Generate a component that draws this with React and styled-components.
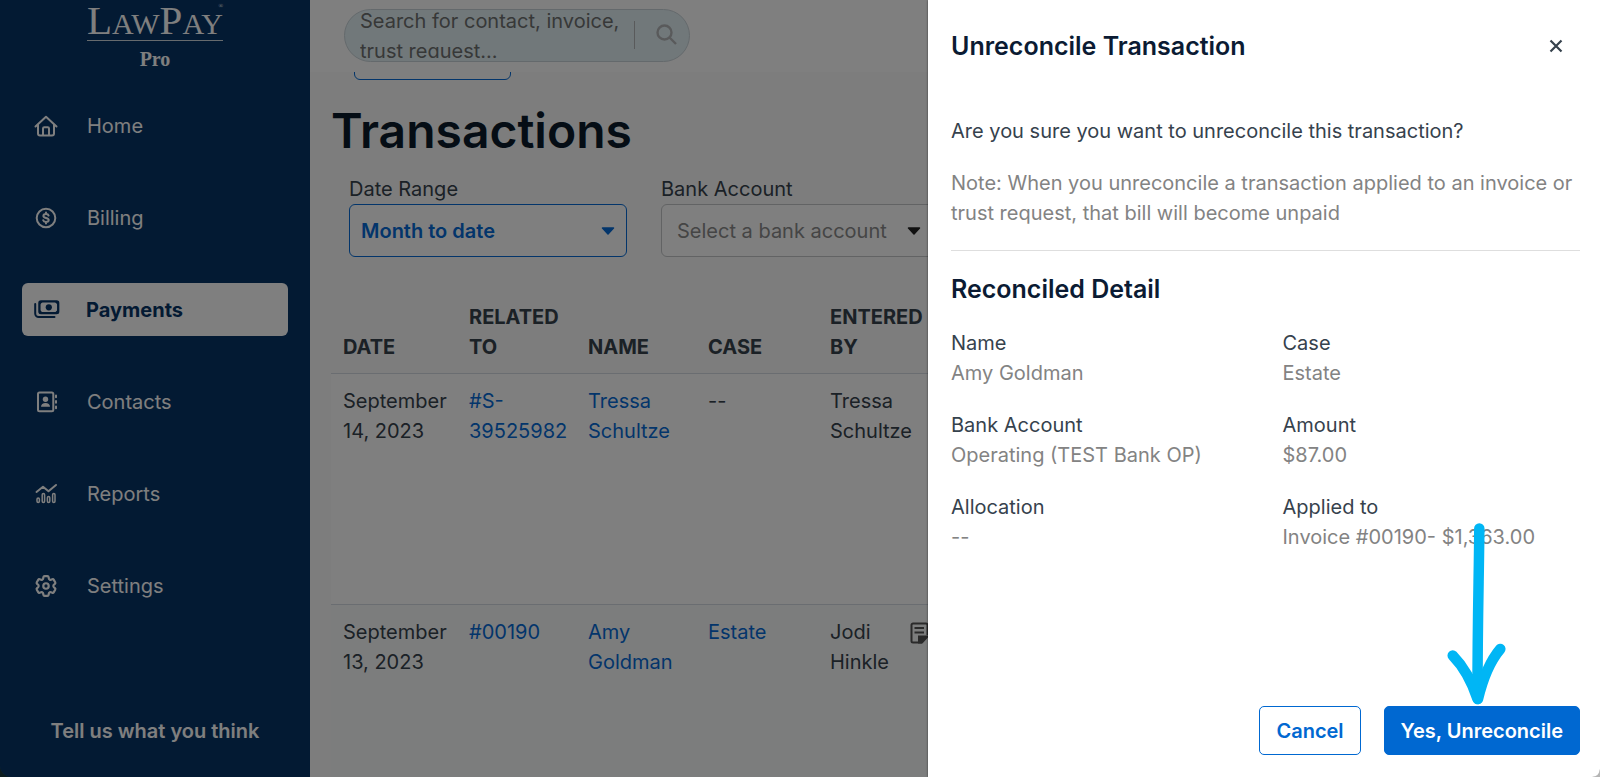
import React from 'react';
import styled, { createGlobalStyle, css } from 'styled-components';

const navItems = [
    { label: 'Home', icon: HomeIcon },
    { label: 'Billing', icon: BillingIcon },
    { label: 'Payments', icon: PaymentsIcon, active: true },
    { label: 'Contacts', icon: ContactsIcon },
    { label: 'Reports', icon: ReportsIcon },
    { label: 'Settings', icon: SettingsIcon },
];

const transactions = [
    { date: 'September 14, 2023', related: '#S-39525982', name: 'Tressa Schultze', matter: '--', enteredBy: 'Tressa Schultze' },
    { date: 'September 13, 2023', related: '#00190', name: 'Amy Goldman', matter: 'Estate', enteredBy: 'Jodi Hinkle', note: true },
];

const details = [
    ['Name', 'Amy Goldman'],
    ['Case', 'Estate'],
    ['Bank Account', 'Operating (TEST Bank OP)'],
    ['Amount', '$87.00'],
    ['Allocation', '--'],
    ['Applied to', 'Invoice #00190- $1,363.00'],
];

export default function App() {
    return (
        <>
            <GlobalStyle />
            <Page>
                <Sidebar />
                <Main>
                    <TopBar>
                        <Search>
                            <SearchInput aria-label="Search" placeholder="Search for contact, invoice, trust request..." />
                            <SearchDivider />
                            <SearchButton aria-label="Submit search"><SearchIcon /></SearchButton>
                        </Search>
                    </TopBar>
                    <Content>
                        <ScrolledButton aria-label="Back" />
                        <Title>Transactions</Title>
                        <Filters>
                            <Filter>
                                <label htmlFor="range">Date Range</label>
                                <SelectBox>
                                    <Select id="range" $selected><option>Month to date</option></Select>
                                    <Caret color="#066bd6" />
                                </SelectBox>
                            </Filter>
                            <Filter>
                                <label htmlFor="account">Bank Account</label>
                                <SelectBox>
                                    <Select id="account"><option>Select a bank account</option></Select>
                                    <Caret color="#222" inset />
                                </SelectBox>
                            </Filter>
                        </Filters>
                        <Transactions />
                    </Content>
                </Main>
                <Overlay />
                <UnreconcileDrawer />
            </Page>
        </>
    );
}

function Sidebar() {
    return (
        <SideNav>
            <Logo>
                <LogoName>L<small>AW</small>P<small>AY</small><sup>®</sup></LogoName>
                <LogoTier>Pro</LogoTier>
            </Logo>
            <NavList>
                {navItems.map(({ label, icon: Icon, active }) => (
                    <li key={label}>
                        <NavLink href="#" $active={active}>
                            <Icon />
                            {label}
                        </NavLink>
                    </li>
                ))}
            </NavList>
            <Feedback href="#">Tell us what you think</Feedback>
        </SideNav>
    );
}

function Transactions() {
    return (
        <Table>
            <colgroup>
                <Col $width={126} />
                <Col $width={119} />
                <Col $width={120} />
                <Col $width={122} />
                <Col $width={80} />
                <col />
            </colgroup>
            <thead>
                <tr>
                    <th>DATE</th>
                    <th>RELATED TO</th>
                    <th>NAME</th>
                    <th>CASE</th>
                    <th>ENTERED BY</th>
                    <th></th>
                </tr>
            </thead>
            <tbody>
                {transactions.map((row) => (
                    <tr key={row.date}>
                        <td>{row.date}</td>
                        <td><a href="#">{row.related}</a></td>
                        <td><a href="#">{row.name}</a></td>
                        <td>{row.matter === '--' ? '--' : <a href="#">{row.matter}</a>}</td>
                        <td>{row.enteredBy}</td>
                        <td>{row.note && <NoteIcon />}</td>
                    </tr>
                ))}
            </tbody>
        </Table>
    );
}

function UnreconcileDrawer() {
    return (
        <Drawer role="dialog" aria-labelledby="drawer-title">
            <DrawerHeader>
                <Heading id="drawer-title">Unreconcile Transaction</Heading>
                <CloseButton aria-label="Close"><CloseIcon /></CloseButton>
            </DrawerHeader>
            <DrawerBody>
                <Question>Are you sure you want to unreconcile this transaction?</Question>
                <Note>Note: When you unreconcile a transaction applied to an invoice or trust request, that bill will become unpaid</Note>
                <Divider />
                <Heading>Reconciled Detail</Heading>
                <DetailGrid>
                    {details.map(([term, value]) => (
                        <div key={term}>
                            <dt>{term}</dt>
                            <dd>{value}</dd>
                        </div>
                    ))}
                </DetailGrid>
            </DrawerBody>
            <DrawerFooter>
                <Button>Cancel</Button>
                <Button $primary>Yes, Unreconcile</Button>
                <Pointer viewBox="0 0 60 184" aria-hidden="true">
                    <path d="M32.300 7.500 C32 55 30.500 95 30.500 175" strokeWidth="10.500" />
                    <path d="M5.700 134.500 C16 145 25 161 30.500 178" strokeWidth="10.500" />
                    <path d="M53.300 128 C44 139 36 157 31 178" strokeWidth="10.500" />
                    <path d="M22 156 L30.500 178 L39 156 Z" strokeWidth="6" fill="#00b6f5" />
                </Pointer>
            </DrawerFooter>
        </Drawer>
    );
}

/* Icons */

function HomeIcon() {
    return (
        <Icon viewBox="0 0 24 24">
            <path d="M1.500 12.500 12 2.800l10.500 9.700" />
            <path d="M4 10.800V19.500a2 2 0 0 0 2 2h12a2 2 0 0 0 2-2v-8.700" />
            <path d="M9 21v-6.500a1.300 1.300 0 0 1 1.300-1.300h3.400a1.300 1.300 0 0 1 1.300 1.300V21" />
        </Icon>
    );
}

function BillingIcon() {
    return (
        <Icon viewBox="0 0 24 24">
            <circle cx="12" cy="12" r="9.300" />
            <path d="M14.600 9.600c-.3-1-1.300-1.500-2.600-1.500-1.500 0-2.600.7-2.600 1.900 0 2.800 5.300 1.200 5.300 4.100 0 1.200-1.200 1.900-2.700 1.900-1.500 0-2.500-.6-2.800-1.700M12 6.600v1.500M12 16v1.500" />
        </Icon>
    );
}

function PaymentsIcon() {
    return (
        <Icon viewBox="0 0 26 24" $wide>
            <path d="M1.200 6V15.500a3.500 3.500 0 0 0 3.500 3.500H20.500" />
            <rect x="5.400" y="3.400" width="18.800" height="11.800" rx="1.600" strokeWidth="2.300" />
            <circle cx="14.800" cy="9.300" r="3.100" fill="currentColor" stroke="none" />
            <path d="M5 3h4.500L5 7.500zM24.500 3H20l4.500 4.500zM5 15.500h4.500L5 11zM24.500 15.500H20l4.500-4.500z" fill="currentColor" stroke="none" />
        </Icon>
    );
}

function ContactsIcon() {
    return (
        <Icon viewBox="0 0 24 24">
            <rect x="4" y="2.500" width="15.300" height="18.700" rx="1.500" />
            <circle cx="11.500" cy="9.300" r="2.700" fill="currentColor" stroke="none" />
            <path d="M7 16.800c0-2.600 1.800-3.900 4.500-3.900s4.500 1.300 4.500 3.900z" fill="currentColor" stroke="none" />
            <path d="M22 5.500v1.800M22 11v1.800M22 16.500v1.800" />
        </Icon>
    );
}

function ReportsIcon() {
    return (
        <Icon viewBox="0 0 24 24">
            <path d="M2.500 10 9 4.800l5.500 4.400L22 3" />
            <rect x="3" y="16" width="2.400" height="4.500" rx="1.200" strokeWidth="1.500" />
            <rect x="8.200" y="11.500" width="2.400" height="9" rx="1.200" strokeWidth="1.500" />
            <rect x="13.400" y="14.500" width="2.400" height="6" rx="1.200" strokeWidth="1.500" />
            <rect x="18.600" y="11.500" width="2.400" height="9" rx="1.200" strokeWidth="1.500" />
        </Icon>
    );
}

function SettingsIcon() {
    return (
        <Icon viewBox="1 1 22 22">
            <path d="M9.594 3.940c.090-.542.560-.940 1.110-.940h2.593c.550 0 1.020.398 1.110.940l.213 1.281c.063.374.313.686.645.870.074.040.147.083.220.127.325.196.720.257 1.075.124l1.217-.456a1.125 1.125 0 0 1 1.370.490l1.296 2.247a1.125 1.125 0 0 1-.260 1.431l-1.003.827c-.293.241-.438.613-.430.992a7.723 7.723 0 0 1 0 .255c-.008.378.137.750.430.991l1.004.827c.424.350.534.955.260 1.430l-1.298 2.247a1.125 1.125 0 0 1-1.369.491l-1.217-.456c-.355-.133-.750-.072-1.076.124a6.470 6.470 0 0 1-.220.128c-.331.183-.581.495-.644.869l-.213 1.281c-.090.543-.560.940-1.110.940h-2.594c-.550 0-1.019-.398-1.110-.940l-.213-1.281c-.062-.374-.312-.686-.644-.870a6.520 6.520 0 0 1-.220-.127c-.325-.196-.720-.257-1.076-.124l-1.217.456a1.125 1.125 0 0 1-1.369-.490l-1.297-2.247a1.125 1.125 0 0 1 .260-1.431l1.004-.827c.292-.240.437-.613.430-.991a6.932 6.932 0 0 1 0-.255c.007-.380-.138-.751-.430-.992l-1.004-.827a1.125 1.125 0 0 1-.260-1.430l1.297-2.247a1.125 1.125 0 0 1 1.370-.491l1.216.456c.356.133.751.072 1.076-.124.072-.044.146-.086.220-.128.332-.183.582-.495.644-.869l.214-1.280Z" />
            <circle cx="12" cy="12" r="2.500" />
        </Icon>
    );
}

function SearchIcon() {
    return (
        <svg width="21" height="21" viewBox="0 0 21 21" fill="none" stroke="#b3b5b7" strokeWidth="2.400">
            <circle cx="8.500" cy="8.500" r="7" />
            <path d="M13.500 13.500 20 20" />
        </svg>
    );
}

function NoteIcon() {
    return (
        <NoteSvg viewBox="0 0 20 22">
            <path d="M12 20.500H3A1.500 1.500 0 0 1 1.500 19V3A1.500 1.500 0 0 1 3 1.500h13A1.500 1.500 0 0 1 17.500 3v10" />
            <path d="M4.500 6h9.500M4.500 10.500h9.500" />
            <path d="M9 20.500V14.500H17.500L12 20.500z" fill="currentColor" />
        </NoteSvg>
    );
}

function CloseIcon() {
    return (
        <svg width="14" height="14" viewBox="0 0 14 14" fill="none" stroke="#36424d" strokeWidth="2.200">
            <path d="M1.500 1.500l11 11M12.500 1.500l-11 11" />
        </svg>
    );
}

function Caret({ color, inset }) {
    return (
        <CaretSvg viewBox="0 0 14 8" $inset={inset}>
            <path d="M1.500 1h11L7 7z" fill={color} stroke={color} strokeWidth="1.500" strokeLinejoin="round" />
        </CaretSvg>
    );
}

/* Styles */

const GlobalStyle = createGlobalStyle`
    * {
        box-sizing: border-box;
    }
    body {
        margin: 0;
        background: linear-gradient(90deg, #0c1c1e 50%, #b5b5b5 50%);
        color: #36424d;
        font: 400 20px/30px Inter, sans-serif;
    }
    button, select, textarea {
        font: inherit;
    }
    h1, h2, p, ul, dl, dd {
        margin: 0;
        padding: 0;
    }
    a {
        color: #066bd6;
        text-decoration: none;
    }
`;

const Page = styled.div`
    display: flex;
    height: 100vh;
    overflow: hidden;
    position: relative;
    border-radius: 0 0 8px 12px;
`;

const SideNav = styled.nav`
    display: flex;
    flex-direction: column;
    flex: 0 0 310px;
    padding: 0 22px 31px;
    background: #073466;
    color: #fff;
`;

const Logo = styled.div`
    display: flex;
    flex-direction: column;
    align-items: center;
    height: 99px;
    font-family: 'Liberation Serif', serif;
`;

const LogoName = styled.div`
    position: relative;
    height: 41px;
    border-bottom: 1px solid #cfd6dd;
    font-size: 41px;
    line-height: 41px;
    small {
        font-size: 30px;
    }
    sup {
        position: absolute;
        top: 2px;
        right: 0;
        font-size: 6px;
        line-height: 8px;
    }
`;

const LogoTier = styled.div`
    margin-top: 3px;
    font-size: 20px;
    font-weight: 700;
`;

const NavList = styled.ul`
    display: flex;
    flex-direction: column;
    gap: 39px;
    list-style: none;
`;

const NavLink = styled.a`
    display: flex;
    align-items: center;
    height: 53px;
    padding-left: 12px;
    gap: 29px;
    border-radius: 6px;
    color: #fff;
    ${({ $active }) => $active && css`
        background: #fff;
        color: #073466;
        font-weight: 700;
    `}
`;

const Icon = styled.svg`
    width: ${({ $wide }) => ($wide ? '26px' : '24px')};
    height: 24px;
    margin-right: ${({ $wide }) => ($wide ? '-3px' : '0')};
    fill: none;
    stroke: currentColor;
    stroke-width: 2;
    stroke-linecap: round;
    stroke-linejoin: round;
`;

const Feedback = styled.a`
    margin-top: auto;
    color: #fff;
    font-weight: 600;
    text-align: center;
`;

const Main = styled.main`
    display: flex;
    flex-direction: column;
    flex: 1;
    min-width: 0;
    background: #fafafa;
`;

const TopBar = styled.header`
    flex: 0 0 72px;
    padding: 9px 34px;
    background: #fff;
`;

const Search = styled.div`
    display: flex;
    align-items: flex-end;
    width: 346px;
    height: 53px;
    padding: 0 12px 3px 15px;
    border: 1px solid #c9d3d8;
    border-radius: 27px;
    background: #e2f0f5;
`;

const SearchInput = styled.textarea`
    flex: 1;
    min-width: 0;
    height: 52px;
    padding: 0;
    border: 0;
    background: none;
    overflow: hidden;
    resize: none;
    &::placeholder {
        color: #6f7071;
    }
`;

const SearchDivider = styled.span`
    width: 1px;
    height: 28px;
    margin-bottom: 9px;
    background: #b3b5b7;
`;

const SearchButton = styled.button`
    display: flex;
    margin: 0 0 13px;
    padding: 0 0 0 21px;
    border: 0;
    background: none;
`;

const Content = styled.div`
    flex: 1;
    padding-left: 21px;
    overflow: hidden;
`;

/* Mostly scrolled away beneath the top bar */
const ScrolledButton = styled.button`
    display: block;
    width: 157px;
    height: 48px;
    margin: -40px 0 0 23px;
    border: 1px solid #066bd6;
    border-radius: 6px;
    background: #fff;
`;

const Title = styled.h1`
    margin: 21px 0 13px;
    color: #0b1b2b;
    font-size: 48px;
    font-weight: 600;
    line-height: 60px;
`;

const Filters = styled.div`
    display: flex;
    gap: 34px;
    padding-left: 18px;
`;

const Filter = styled.div`
    flex: 0 0 278px;
`;

const SelectBox = styled.div`
    position: relative;
`;

const Select = styled.select`
    display: block;
    width: 100%;
    height: 53px;
    padding: 0 11px 0 15px;
    appearance: none;
    border: 1px solid #c4c6c8;
    border-radius: 6px;
    background: #fff;
    color: #8b8b8b;
    ${({ $selected }) => $selected && css`
        padding-left: 11px;
        border-color: #066bd6;
        color: #066bd6;
        font-weight: 600;
    `}
`;

const CaretSvg = styled.svg`
    position: absolute;
    top: 23px;
    right: ${({ $inset }) => ($inset ? '18px' : '12px')};
    width: 14px;
    height: 8px;
    pointer-events: none;
`;

const Table = styled.table`
    width: 100%;
    margin-top: 32px;
    border-collapse: collapse;
    table-layout: fixed;
    th, td {
        padding: 12px 0 12px 12px;
        text-align: left;
        vertical-align: top;
    }
    th {
        padding-top: 13px;
        padding-bottom: 11px;
        vertical-align: bottom;
        border-bottom: 1px solid #d5dbe2;
        font-weight: 700;
    }
    td {
        height: 231px;
        border-bottom: 1px solid #d5dbe2;
        background: #fff;
    }
    tr:nth-child(even) td {
        background: #f9fafb;
    }
`;

const Col = styled.col`
    width: ${({ $width }) => $width}px;
`;

const NoteSvg = styled.svg`
    display: block;
    width: 20px;
    height: 22px;
    margin-top: 5px;
    color: #555;
    fill: none;
    stroke: currentColor;
    stroke-width: 2;
`;

const Overlay = styled.div`
    position: absolute;
    inset: 0;
    background: rgba(0, 0, 0, 0.5);
`;

const Drawer = styled.section`
    position: absolute;
    top: 0;
    right: 0;
    bottom: 0;
    display: flex;
    flex-direction: column;
    width: 42%;
    padding: 0 20px 22px 23px;
    background: #fff;
    box-shadow: 0 0 2px rgba(0, 0, 0, 0.6);
`;

const DrawerHeader = styled.header`
    display: flex;
    align-items: center;
    justify-content: space-between;
    height: 92px;
    padding-right: 17px;
`;

const Heading = styled.h2`
    color: #0b1b33;
    font-size: 25px;
    font-weight: 600;
    line-height: 30px;
`;

const CloseButton = styled.button`
    display: flex;
    padding: 0;
    border: 0;
    background: none;
`;

const DrawerBody = styled.div`
    flex: 1;
    padding-top: 24px;
`;

const Question = styled.p`
    margin-bottom: 22px;
`;

const Note = styled.p`
    color: #838383;
`;

const Divider = styled.hr`
    height: 1px;
    margin: 22px 0 23px;
    border: 0;
    background: #dedede;
`;

const DetailGrid = styled.dl`
    display: grid;
    grid-template-columns: 1fr 1fr;
    gap: 22px 34px;
    margin-top: 24px;
    dd {
        color: #838383;
    }
`;

const DrawerFooter = styled.footer`
    position: relative;
    display: flex;
    justify-content: flex-end;
    gap: 23px;
`;

const Button = styled.button`
    height: 49px;
    padding: 0 16px;
    border: 1px solid #0068d1;
    border-radius: 5px;
    background: ${({ $primary }) => ($primary ? '#0068d1' : '#fff')};
    color: ${({ $primary }) => ($primary ? '#fff' : '#0068d1')};
    font-weight: 600;
`;

const Pointer = styled.svg`
    position: absolute;
    right: 73px;
    bottom: 50px;
    width: 60px;
    height: 184px;
    fill: none;
    stroke: #00b6f5;
    stroke-linecap: round;
    stroke-linejoin: round;
    pointer-events: none;
`;
